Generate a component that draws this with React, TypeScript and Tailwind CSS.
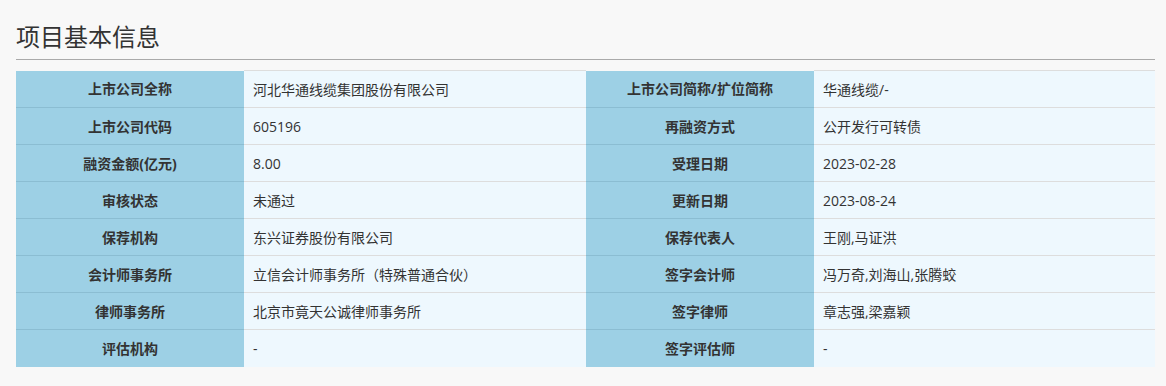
import React from "react";

const rows: [string, string, string, string][] = [
  ["上市公司全称", "河北华通线缆集团股份有限公司", "上市公司简称/扩位简称", "华通线缆/-"],
  ["上市公司代码", "605196", "再融资方式", "公开发行可转债"],
  ["融资金额(亿元)", "8.00", "受理日期", "2023-02-28"],
  ["审核状态", "未通过", "更新日期", "2023-08-24"],
  ["保荐机构", "东兴证券股份有限公司", "保荐代表人", "王刚,马证洪"],
  ["会计师事务所", "立信会计师事务所（特殊普通合伙）", "签字会计师", "冯万奇,刘海山,张腾蛟"],
  ["律师事务所", "北京市竟天公诚律师事务所", "签字律师", "章志强,梁嘉颖"],
  ["评估机构", "-", "签字评估师", "-"],
];

export default function App() {
  return (
    <div
      className="w-[1166px] h-[386px] bg-[#f8f8f8] text-[#333] overflow-hidden"
      style={{ fontFamily: '"Open Sans","Noto Sans CJK SC",sans-serif' }}
    >
      <div className="pl-4 pr-[11px] pt-[19px]">
        <h2 className="text-[24px] leading-[36px] text-[#333] font-normal pb-[4px] border-b border-[#aaaaaa]">
          项目基本信息
        </h2>
        <table className="mt-[10px] w-full border-collapse table-fixed text-[14px]">
          <colgroup>
            <col className="w-[228px]" />
            <col className="w-[342px]" />
            <col className="w-[228px]" />
            <col />
          </colgroup>
          <tbody>
            {rows.map((r, i) => (
              <tr key={i} className="h-[37px]">
                <td className={`bg-[#9dd0e5] text-center font-bold ${i === 0 ? "" : "border-t border-[#8bbdd2]"}`}>{r[0]}</td>
                <td className="bg-[#eef8fe] pl-[9px] border-t border-[#dddddd]">{r[1]}</td>
                <td className={`bg-[#9dd0e5] text-center font-bold ${i === 0 ? "" : "border-t border-[#8bbdd2]"}`}>{r[2]}</td>
                <td className="bg-[#eef8fe] pl-[9px] border-t border-[#dddddd]">{r[3]}</td>
              </tr>
            ))}
          </tbody>
        </table>
      </div>
    </div>
  );
}
